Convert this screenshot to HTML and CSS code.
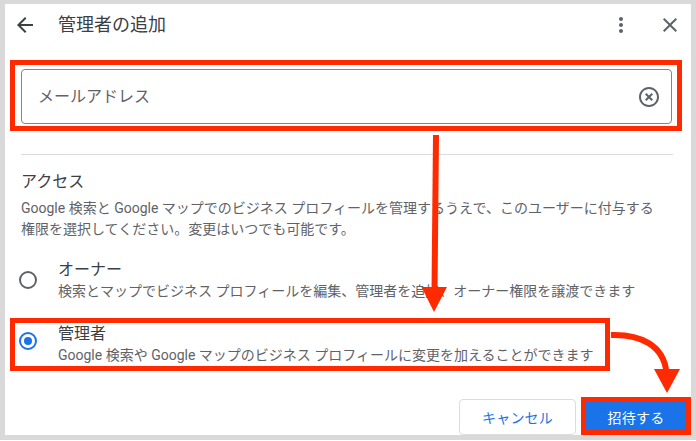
FILE: index.html
```html
<!DOCTYPE html>
<html lang="ja">
<head>
<meta charset="utf-8">
<title>管理者の追加</title>
<link rel="stylesheet" href="styles.css">
</head>
<body>
<div class="frame">
  <div class="dialog">
    <header class="dlg-header">
      <svg class="icon icon-back" viewBox="0 0 24 24"><path d="M20 11H7.83l5.59-5.59L12 4l-8 8 8 8 1.41-1.41L7.83 13H20v-2z"/></svg>
      <h1 class="title">管理者の追加</h1>
      <span class="spacer"></span>
      <svg class="icon icon-more" viewBox="0 0 24 24"><path d="M12 8c1.1 0 2-.9 2-2s-.9-2-2-2-2 .9-2 2 .9 2 2 2zm0 2c-1.1 0-2 .9-2 2s.9 2 2 2 2-.9 2-2-.9-2-2-2zm0 6c-1.1 0-2 .9-2 2s.9 2 2 2 2-.9 2-2-.9-2-2-2z"/></svg>
      <svg class="icon icon-close" viewBox="0 0 24 24"><path d="M19 6.41L17.59 5 12 10.59 6.41 5 5 6.41 10.59 12 5 17.59 6.41 19 12 13.41 17.59 19 19 17.59 13.41 12z"/></svg>
    </header>

    <div class="field">
      <span class="placeholder">メールアドレス</span>
      <svg class="icon icon-clear" viewBox="0 0 24 24"><path d="M14.59 8L12 10.59 9.41 8 8 9.41 10.59 12 8 14.59 9.41 16 12 13.41 14.59 16 16 14.59 13.41 12 16 9.41 14.59 8zM12 2C6.47 2 2 6.47 2 12s4.47 10 10 10 10-4.470 10-10S17.53 2 12 2zm0 18c-4.41 0-8-3.59-8-8s3.590-8 8-8 8 3.59 8 8-3.59 8-8 8z"/></svg>
    </div>

    <hr class="divider">

    <h2 class="section-title">アクセス</h2>
    <p class="desc">Google 検索と Google マップでのビジネス プロフィールを管理するうえで、このユーザーに付与する<br>権限を選択してください。変更はいつでも可能です。</p>

    <div class="options">
      <div class="option">
        <span class="radio"></span>
        <div class="opt-text">
          <span class="opt-label">オーナー</span>
          <span class="opt-sub">検索とマップでビジネス プロフィールを編集、管理者を追加、オーナー権限を譲渡できます</span>
        </div>
      </div>
      <div class="option option-admin">
        <span class="radio radio-checked"></span>
        <div class="opt-text">
          <span class="opt-label">管理者</span>
          <span class="opt-sub">Google 検索や Google マップのビジネス プロフィールに変更を加えることができます</span>
        </div>
      </div>
    </div>

    <div class="actions">
      <button class="btn btn-outline">キャンセル</button>
      <button class="btn btn-primary">招待する</button>
    </div>
  </div>
</div>

<svg class="annotations" viewBox="0 0 696 441" width="696" height="441">
  <g fill="none" stroke="#ff2a00" stroke-width="5">
    <rect x="12.5" y="62.5" width="667" height="66"/>
    <rect x="12.5" y="320.5" width="595" height="48"/>
    <rect x="583.5" y="399.5" width="105" height="33"/>
  </g>
  <g fill="none" stroke="#ff2a00" stroke-width="6">
    <path d="M436 135 L434.5 292"/>
    <path d="M611 335 C 640 334 664 345 666.5 373"/>
  </g>
  <g fill="#ff2a00">
    <polygon points="421.5,287 447,287 434,312"/>
    <polygon points="654,369 680,369 667,393"/>
  </g>
</svg>
</body>
</html>
```

FILE: styles.css
```css
* { box-sizing: border-box; }

html, body {
  margin: 0;
  padding: 0;
  background: #ffffff;
}

body {
  width: 696px;
  height: 441px;
  position: relative;
  overflow: hidden;
  font-family: Roboto, "Noto Sans CJK JP", "Noto Sans", sans-serif;
  color: #3c4043;
}

.frame {
  width: 696px;
  height: 440px;
  border-style: solid;
  border-color: #d9d9d9;
  border-width: 4px 5px 5px 5px;
  background: #ffffff;
  overflow: hidden;
}

.dialog {
  padding: 0 19px 0 16px;
}

/* header */
.dlg-header {
  display: flex;
  align-items: center;
  height: 42px;
  margin: 0 -9.5px 0 -8px;
}

.icon {
  width: 24px;
  height: 24px;
  flex: none;
  fill: #5f6368;
}

.icon-back { fill: #3c4043; }

.title {
  margin: 0 0 0 21px;
  font-size: 18px;
  font-weight: 400;
  line-height: 24px;
  color: #3c4043;
}

.spacer { flex: 1; }

.icon-more { fill: #5f6368; }
.icon-close { margin-left: 24.5px; fill: #5f6368; }

/* email field */
.field {
  margin-top: 23px;
  height: 55px;
  border: 1px solid #80868b;
  border-radius: 4px;
  display: flex;
  align-items: center;
  padding: 0 10px 0 16px;
}

.placeholder {
  flex: 1;
  font-size: 16px;
  line-height: 24px;
  color: #5f6368;
}

.icon-clear { fill: #5f6368; }

.divider {
  margin: 30px -1px 0 0;
  border: 0;
  border-top: 1px solid #dadce0;
  height: 0;
}

.section-title {
  margin: 15px 0 0;
  font-size: 16px;
  font-weight: 400;
  line-height: 24px;
  color: #3c4043;
}

.desc {
  margin: 4px 0 0;
  font-size: 14px;
  line-height: 21px;
  color: #5f6368;
}

/* options */
.options {
  margin-top: 19px;
  display: flex;
  flex-direction: column;
  gap: 22px;
}

.option {
  display: flex;
  align-items: center;
}

.radio {
  width: 18px;
  height: 18px;
  flex: none;
  border: 2px solid #5f6368;
  border-radius: 50%;
  margin: 0 21px 0 -2px;
  display: flex;
  align-items: center;
  justify-content: center;
}

.option-admin .radio { margin-top: -6px; }

.radio-checked {
  border-color: #1a73e8;
}

.radio-checked::after {
  content: "";
  width: 8px;
  height: 8px;
  border-radius: 50%;
  background: #1a73e8;
}

.opt-text {
  display: flex;
  flex-direction: column;
}

.opt-label {
  font-size: 16px;
  line-height: 22px;
  color: #3c4043;
}

.opt-sub {
  font-size: 14px;
  line-height: 20px;
  color: #5f6368;
  white-space: nowrap;
}

/* actions */
.actions {
  margin: 34px -16px 0 0;
  display: flex;
  justify-content: flex-end;
  gap: 8px;
}

.btn {
  height: 36px;
  border-radius: 4px;
  font-family: Roboto, "Noto Sans CJK JP", sans-serif;
  font-size: 14px;
  font-weight: 400;
  letter-spacing: 0.2px;
  padding: 0;
  cursor: pointer;
}

.btn-outline {
  width: 117px;
  background: #ffffff;
  border: 1px solid #dadce0;
  color: #1a73e8;
}

.btn-primary {
  width: 104px;
  background: #1a73e8;
  border: 0;
  color: #ffffff;
}

/* annotation overlay */
.annotations {
  position: absolute;
  left: 0;
  top: 0;
  pointer-events: none;
}
```
